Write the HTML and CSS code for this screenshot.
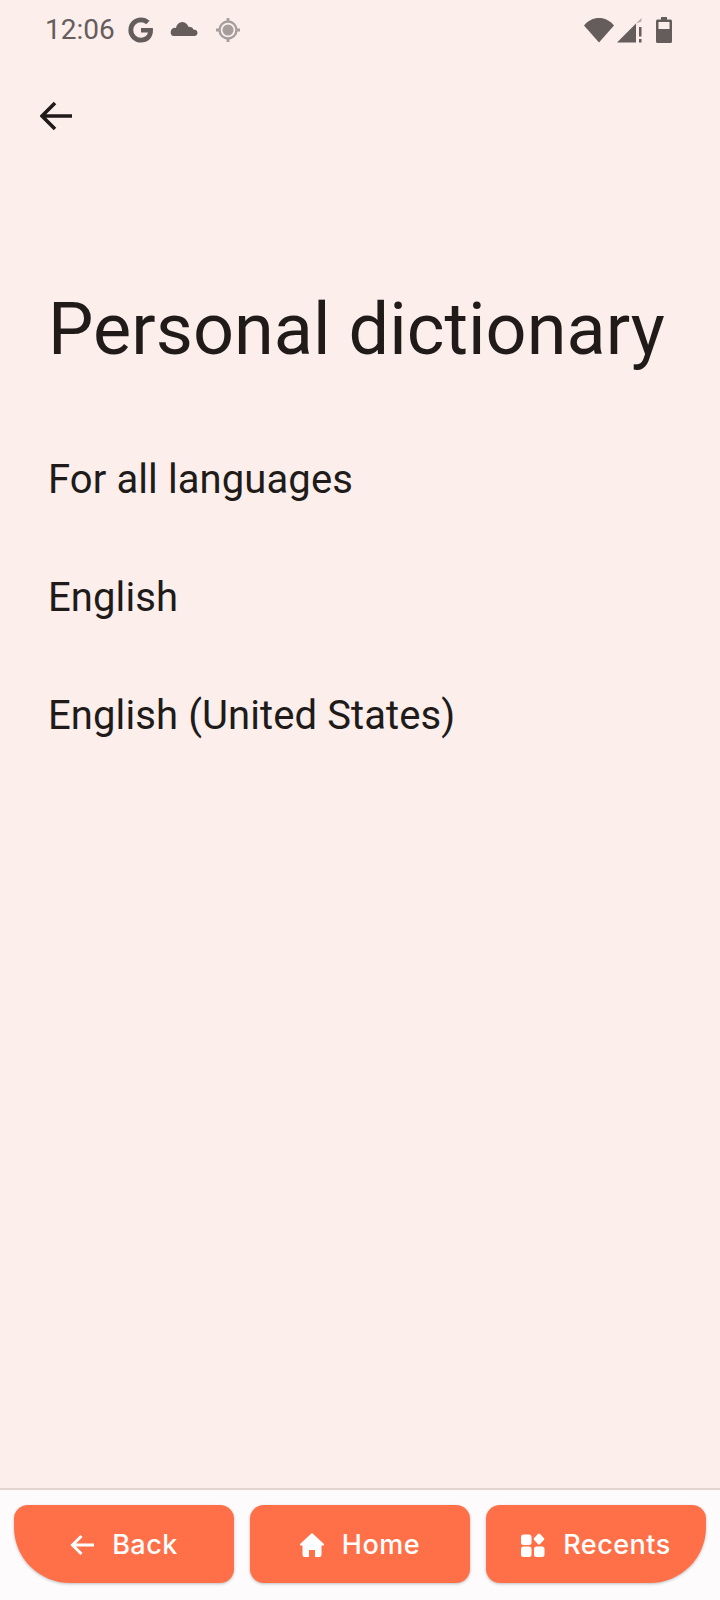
FILE: index.html
```html
<!DOCTYPE html>
<html lang="en">
<head>
  <meta charset="UTF-8" />
  <meta name="viewport" content="width=device-width, initial-scale=1" />
  <title>Personal dictionary</title>
  <link rel="stylesheet" href="styles.css">
</head>
<body>
  <div class="status-bar">
    <div class="status-left">
      <span class="clock">12:06</span>
      <svg class="icon-g" viewBox="0 0 26 26"><path d="M24.800 11H13v4.600h7c-.7 3-3.400 5.200-7 5.200a7.800 7.800 0 1 1 0-15.600c2 0 3.800.7 5.200 2l3.400-3.400A12.800 12.800 0 0 0 13 .4a12.600 12.600 0 1 0 0 25.200c7 0 12-4.800 12-12.300 0-.8-.1-1.600-.2-2.300z"/></svg>
      <svg class="icon-cloud" viewBox="0 0 28 14"><path d="M3.500 14h21a3.200 3.200 0 0 0 .6-6.300h-1.300a5 5 0 0 0-5.300-2.800A7.600 7.600 0 0 0 12.500 0 6.400 6.400 0 0 0 6 5.900 4 4 0 0 0 .8 9.500C.4 12 1.500 14 3.500 14z"/></svg>
      <svg class="icon-gps" viewBox="0 0 24 24"><circle cx="12" cy="12" r="5.500"/><circle cx="12" cy="12" r="8.500" fill="none" stroke-width="2.400"/><path d="M12 0v4M12 20v4M0 12h4M20 12h4" fill="none" stroke-width="2.800"/></svg>
    </div>
    <div class="status-right">
      <svg class="icon-wifi" viewBox="0 0 30 26"><path d="M15 25.500 0 8.500C4 3.500 9.200 1 15 1s11 2.500 15 7.500z"/></svg>
      <svg class="icon-signal" viewBox="0 0 25 26"><path d="M0 25.500 19 6.500v19z"/><path class="dim" d="M19 6.500 24.500 1v3.500z"/><path d="M22 10h2.500v9.500H22zM22 22h2.500v3.500H22z"/></svg>
      <svg class="icon-battery" viewBox="0 0 16 26"><path d="M5 0h6v2.500h3.500A1.500 1.500 0 0 1 16 4v20.500a1.500 1.500 0 0 1-1.500 1.500h-13A1.500 1.500 0 0 1 0 24.500V4a1.500 1.500 0 0 1 1.500-1.500H5z"/><rect class="battery-empty" x="2.500" y="5" width="11" height="7"/></svg>
    </div>
  </div>

  <div class="toolbar">
    <svg class="icon-back" viewBox="0 0 32 30"><path d="M32 15H3M15 2 2 15l13 13" fill="none" stroke-width="3.600"/></svg>
  </div>

  <h1 class="title">Personal dictionary</h1>

  <ul class="lang-list">
    <li>For all languages</li>
    <li>English</li>
    <li>English (United States)</li>
  </ul>

  <nav class="nav-bar">
    <button class="nav-btn nav-first">
      <svg viewBox="0 0 24 24"><path d="M24 12H3M11.500 3 2.500 12l9 9" fill="none" stroke-width="3"/></svg>
      <span>Back</span>
    </button>
    <button class="nav-btn">
      <svg viewBox="0 0 24 24"><path class="solid" d="M12 0 0 11c-.4.900 0 1.600 1 1.600h1.500v9.400c0 1.100.9 2 2 2H9v-7h6v7h4.500c1.100 0 2-.9 2-2v-9.400H23c1 0 1.400-.7 1-1.600z"/></svg>
      <span>Home</span>
    </button>
    <button class="nav-btn nav-last">
      <svg viewBox="0 0 24 24"><g class="solid"><rect x="0" y="1.500" width="10.500" height="10.500" rx="2.500"/><rect x="0" y="13.500" width="10.500" height="10.500" rx="2.500"/><rect x="13" y="13.500" width="10.500" height="10.500" rx="2.500"/><rect x="13.800" y="1.800" width="8.400" height="8.400" rx="1.500" transform="rotate(45 18 6)"/></g></svg>
      <span>Recents</span>
    </button>
  </nav>
</body>
</html>
```

FILE: styles.css
```css
* {
  box-sizing: border-box;
}

html, body {
  height: 100%;
}

body {
  margin: 0;
  background: #fbeeeb;
  color: #201a19;
  font-family: Roboto, sans-serif;
  display: flex;
  flex-direction: column;
  height: 1600px;
}

.status-bar {
  height: 60px;
  padding: 0 48px 0 45px;
  display: flex;
  justify-content: space-between;
  align-items: center;
  color: #655d5c;
  fill: #655d5c;
}

.status-left,
.status-right {
  display: flex;
  align-items: center;
}

.clock {
  font-size: 28px;
  line-height: 32px;
}

.icon-g {
  width: 26px;
  height: 26px;
  margin-left: 13px;
}

.icon-cloud {
  width: 28px;
  height: 14px;
  margin-left: 16px;
  margin-top: -2px;
}

.icon-gps {
  width: 24px;
  height: 24px;
  margin-left: 18px;
  fill: #a59e9c;
  stroke: #a59e9c;
}

.icon-gps circle:first-child {
  stroke: none;
}

.icon-wifi {
  width: 30px;
  height: 26px;
}

.icon-signal {
  width: 25px;
  height: 26px;
  margin-left: 3px;
}

.dim {
  fill: #b5adab;
}

.icon-battery {
  width: 16px;
  height: 26px;
  margin-left: 14px;
}

.battery-empty {
  fill: #fbeeeb;
}

.toolbar {
  height: 112px;
  padding: 41px 0 0 40px;
}

.icon-back {
  display: block;
  width: 32px;
  height: 30px;
  stroke: #201a19;
}

.title {
  margin: 116px 0 0;
  padding-left: 48px;
  font-size: 72px;
  font-weight: 400;
  line-height: 84px;
  letter-spacing: 0.05px;
  white-space: nowrap;
}

.lang-list {
  list-style: none;
  margin: 48px 0 0;
  padding: 0;
  flex: 1;
}

.lang-list li {
  height: 118px;
  padding-left: 48px;
  display: flex;
  align-items: center;
  font-size: 40px;
  letter-spacing: 0.1px;
}

.nav-bar {
  height: 112px;
  background: #fdfbfc;
  border-top: 2px solid #e3d4d1;
  padding: 15px 14px 17px;
  display: flex;
  gap: 16px;
}

.nav-btn {
  flex: 1;
  height: 78px;
  border: none;
  border-radius: 14px;
  background: #ff7049;
  color: #fff;
  fill: #fff;
  stroke: #fff;
  box-shadow: 0 1px 3px rgb(0 0 0 / 0.25);
  font-family: Inter, sans-serif;
  font-size: 27px;
  font-weight: 500;
  letter-spacing: 0.5px;
  display: flex;
  align-items: center;
  justify-content: center;
  gap: 18px;
  padding: 1px 0 0;
}

.nav-btn span {
  stroke: none;
}

.nav-btn .solid {
  stroke: none;
}

.nav-btn svg {
  width: 24px;
  height: 24px;
}

.nav-first {
  border-bottom-left-radius: 56px;
}

.nav-last {
  border-bottom-right-radius: 56px;
}
```
